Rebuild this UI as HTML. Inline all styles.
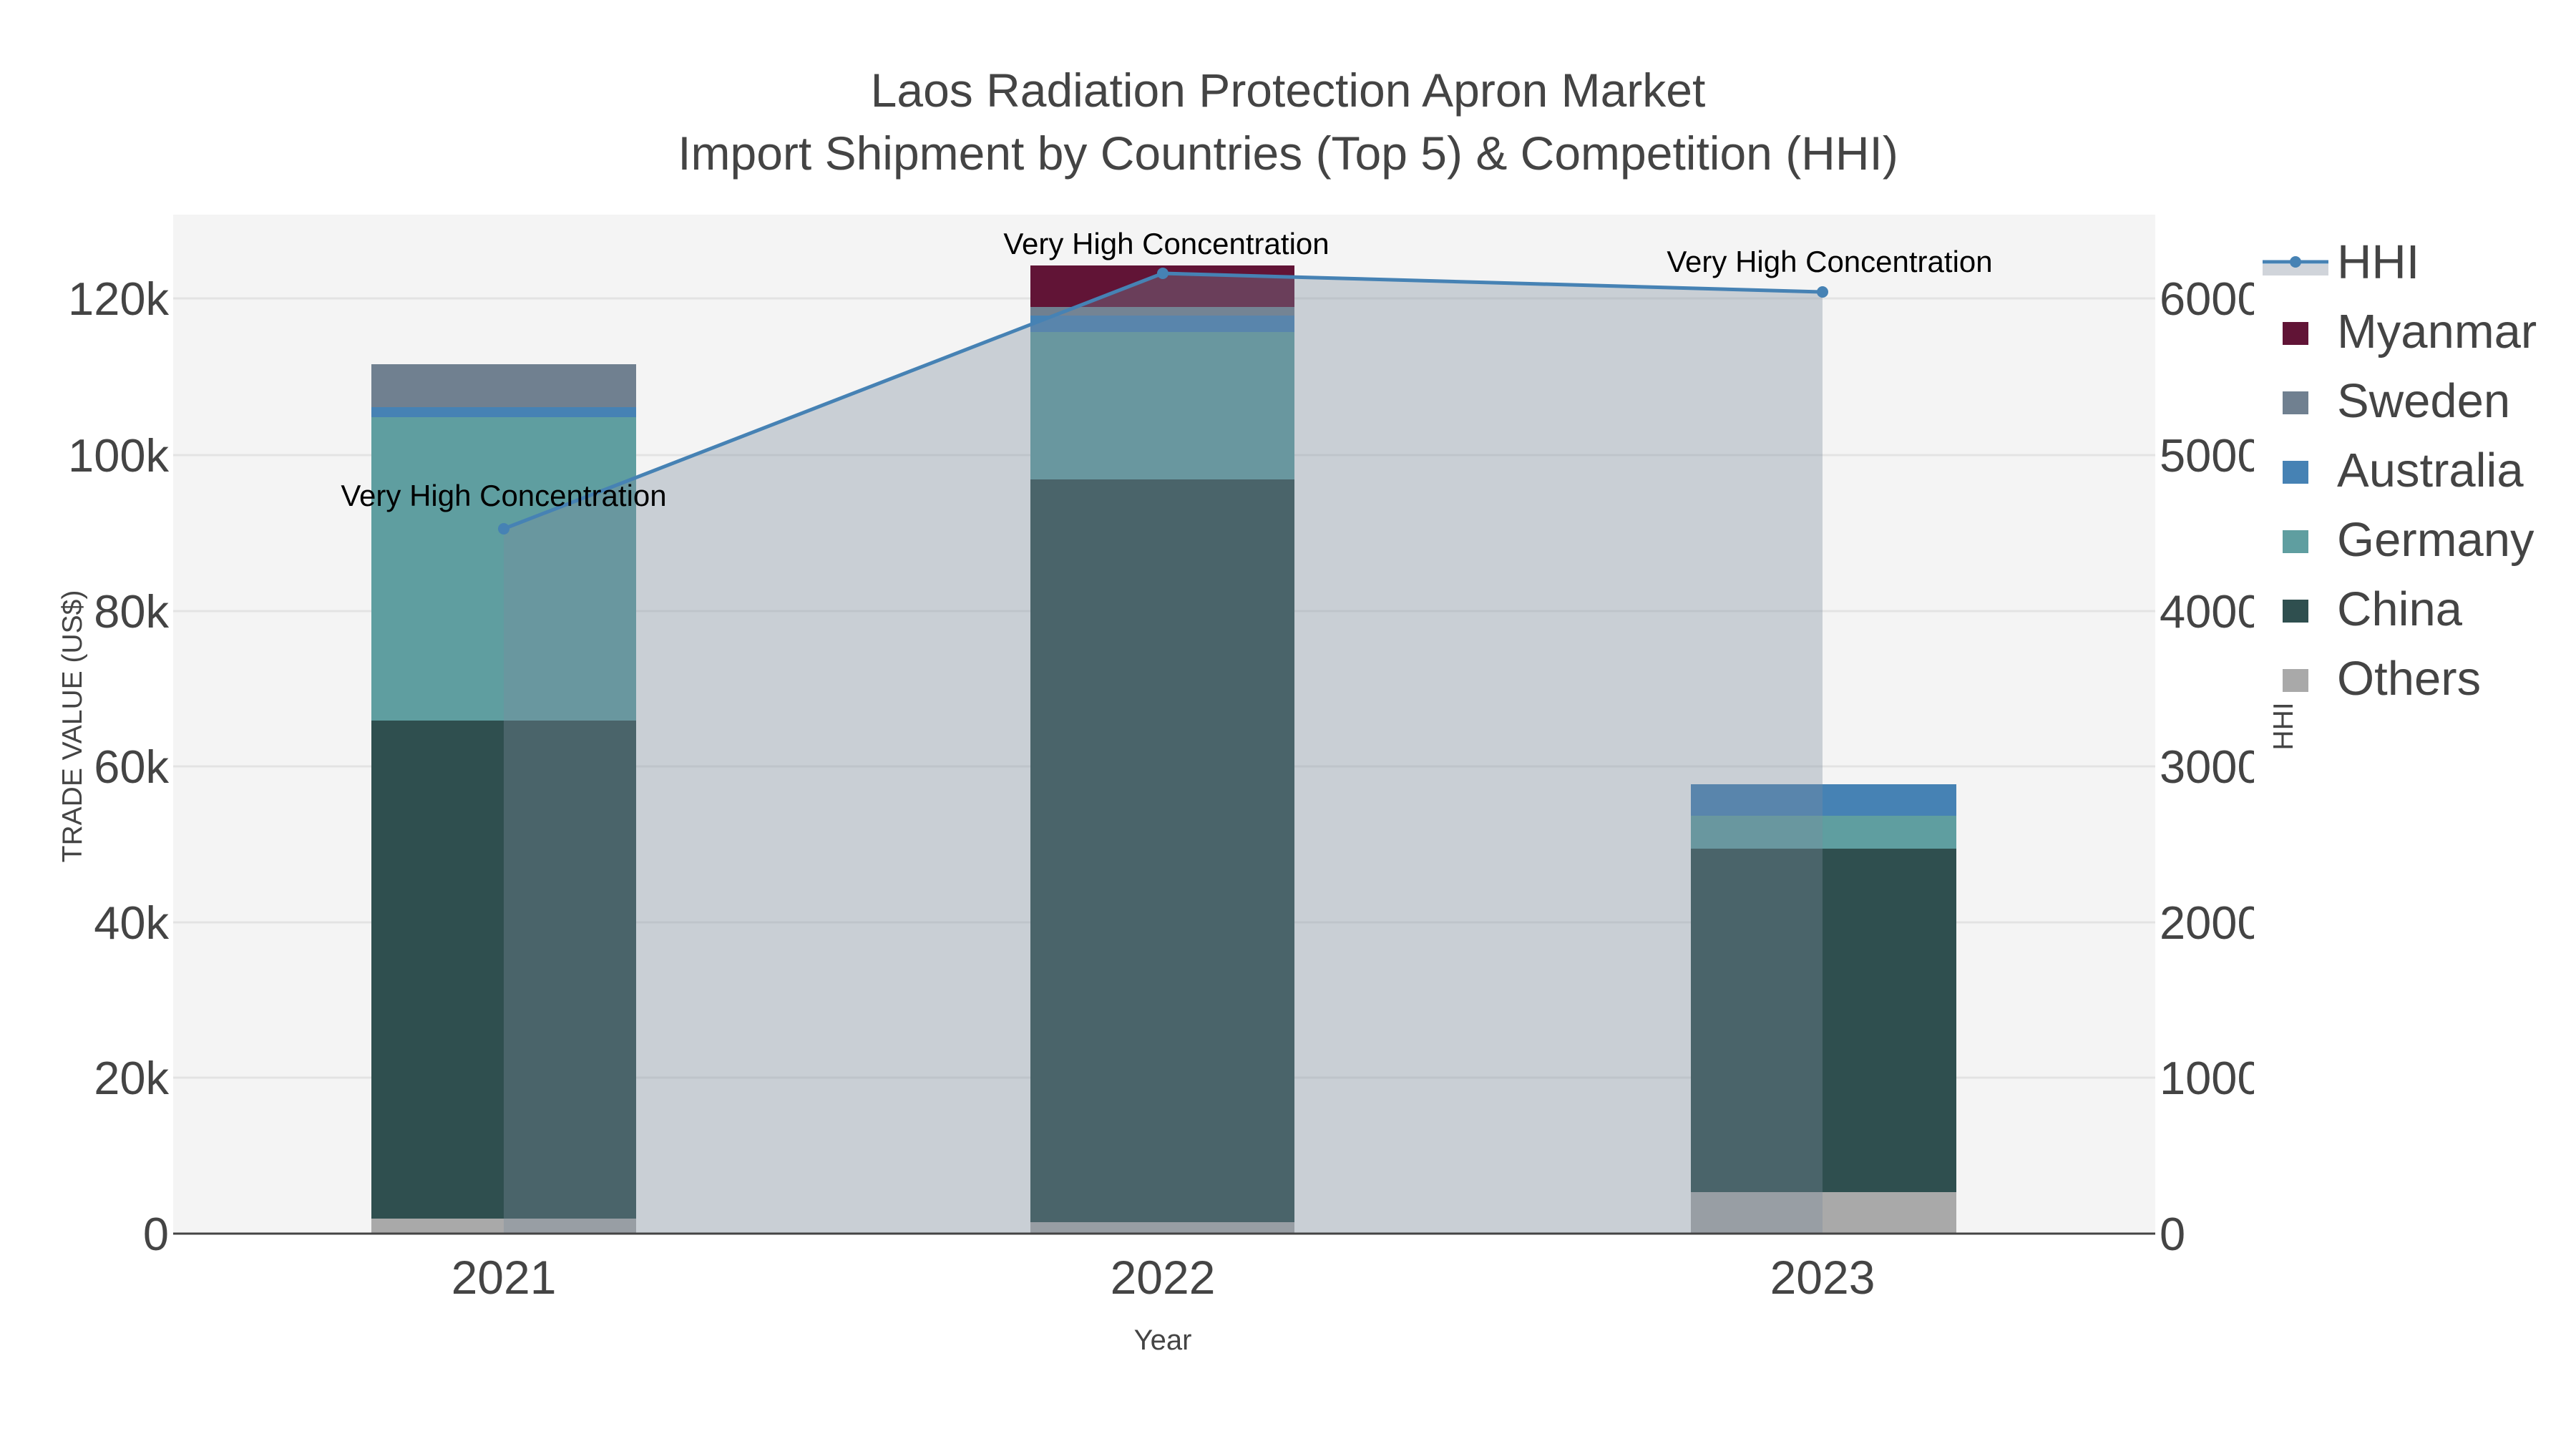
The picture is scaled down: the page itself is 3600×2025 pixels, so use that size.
<!DOCTYPE html>
<html><head><meta charset="utf-8"><style>
html,body{margin:0;padding:0;background:#fff;}
svg{display:block;font-family:"Liberation Sans",sans-serif;}
</style></head><body>
<svg width="3600" height="2025" viewBox="0 0 3600 2025" xmlns="http://www.w3.org/2000/svg">
<rect width="3600" height="2025" fill="#fff"/>
<rect x="242" y="300" width="2770" height="1424" fill="#f4f4f4"/>
<g stroke="#e3e3e3" stroke-width="3">
<line x1="242" x2="3012" y1="417" y2="417"/>
<line x1="242" x2="3012" y1="636" y2="636"/>
<line x1="242" x2="3012" y1="854" y2="854"/>
<line x1="242" x2="3012" y1="1071" y2="1071"/>
<line x1="242" x2="3012" y1="1289" y2="1289"/>
<line x1="242" x2="3012" y1="1506" y2="1506"/>
</g>
<!-- 2021 -->
<rect x="519" y="1703" width="370" height="21" fill="#a9a9a9"/>
<rect x="519" y="1007" width="370" height="696" fill="#2f4f4f"/>
<rect x="519" y="583" width="370" height="424" fill="#5f9ea0"/>
<rect x="519" y="569" width="370" height="14" fill="#4682b4"/>
<rect x="519" y="509" width="370" height="60" fill="#708090"/>
<!-- 2022 -->
<rect x="1440" y="1708" width="369" height="16" fill="#a9a9a9"/>
<rect x="1440" y="670" width="369" height="1038" fill="#2f4f4f"/>
<rect x="1440" y="464" width="369" height="206" fill="#5f9ea0"/>
<rect x="1440" y="441" width="369" height="23" fill="#4682b4"/>
<rect x="1440" y="429" width="369" height="12" fill="#708090"/>
<rect x="1440" y="371" width="369" height="58" fill="#611436"/>
<!-- 2023 -->
<rect x="2363" y="1666" width="371" height="58" fill="#a9a9a9"/>
<rect x="2363" y="1186" width="371" height="480" fill="#2f4f4f"/>
<rect x="2363" y="1140" width="371" height="46" fill="#5f9ea0"/>
<rect x="2363" y="1096" width="371" height="44" fill="#4682b4"/>
<!-- HHI fill -->
<polygon points="704,739 1625,382 2547,408 2547,1724 704,1724" fill="rgba(124,140,158,0.355)"/>
<line x1="242" x2="3012" y1="1724" y2="1724" stroke="#444" stroke-width="3"/>
<polyline points="704,739 1625,382 2547,408" fill="none" stroke="#4682b4" stroke-width="5"/>
<circle cx="704" cy="739" r="8" fill="#4682b4"/>
<circle cx="1625" cy="382" r="8" fill="#4682b4"/>
<circle cx="2547" cy="408" r="8" fill="#4682b4"/>
<g font-size="42" fill="#000" text-anchor="middle">
<text x="704" y="707">Very High Concentration</text>
<text x="1630" y="355">Very High Concentration</text>
<text x="2557" y="380">Very High Concentration</text>
</g>
<!-- titles -->
<g fill="#444" text-anchor="middle" font-size="66">
<text x="1800" y="149">Laos Radiation Protection Apron Market</text>
<text x="1800" y="237">Import Shipment by Countries (Top 5) &amp; Competition (HHI)</text>
</g>
<!-- left ticks -->
<g fill="#444" font-size="65" text-anchor="end">
<text x="236" y="440">120k</text>
<text x="236" y="659">100k</text>
<text x="236" y="877">80k</text>
<text x="236" y="1094">60k</text>
<text x="236" y="1312">40k</text>
<text x="236" y="1529">20k</text>
<text x="236" y="1747">0</text>
</g>
<clipPath id="rc"><rect x="3000" y="300" width="150" height="1500"/></clipPath>
<g fill="#444" font-size="65" clip-path="url(#rc)">
<text x="3018" y="440">6000</text>
<text x="3018" y="659">5000</text>
<text x="3018" y="877">4000</text>
<text x="3018" y="1094">3000</text>
<text x="3018" y="1312">2000</text>
<text x="3018" y="1529">1000</text>
<text x="3018" y="1747">0</text>
</g>
<g fill="#444" font-size="66" text-anchor="middle">
<text x="704" y="1808">2021</text>
<text x="1625" y="1808">2022</text>
<text x="2547" y="1808">2023</text>
</g>
<text x="1625" y="1886" fill="#444" font-size="40" text-anchor="middle">Year</text>
<text transform="translate(114,1015) rotate(-90)" fill="#444" font-size="39" text-anchor="middle">TRADE VALUE (US$)</text>
<text transform="translate(3204,1015) rotate(-90)" fill="#444" font-size="39" text-anchor="middle">HHI</text>
<!-- legend -->
<rect x="3162" y="369" width="92" height="16" fill="#d0d4da"/>
<line x1="3162" x2="3254" y1="366" y2="366" stroke="#4682b4" stroke-width="5"/>
<circle cx="3208" cy="366" r="8" fill="#4682b4"/>
<rect x="3190" y="450" width="36" height="32" fill="#611436"/>
<rect x="3190" y="547" width="36" height="32" fill="#708090"/>
<rect x="3190" y="644" width="36" height="32" fill="#4682b4"/>
<rect x="3190" y="741" width="36" height="32" fill="#5f9ea0"/>
<rect x="3190" y="838" width="36" height="32" fill="#2f4f4f"/>
<rect x="3190" y="935" width="36" height="32" fill="#a9a9a9"/>
<g fill="#444" font-size="67">
<text x="3266" y="389">HHI</text>
<text x="3266" y="486">Myanmar</text>
<text x="3266" y="583">Sweden</text>
<text x="3266" y="680">Australia</text>
<text x="3266" y="777">Germany</text>
<text x="3266" y="874">China</text>
<text x="3266" y="971">Others</text>
</g>
</svg>
</body></html>
